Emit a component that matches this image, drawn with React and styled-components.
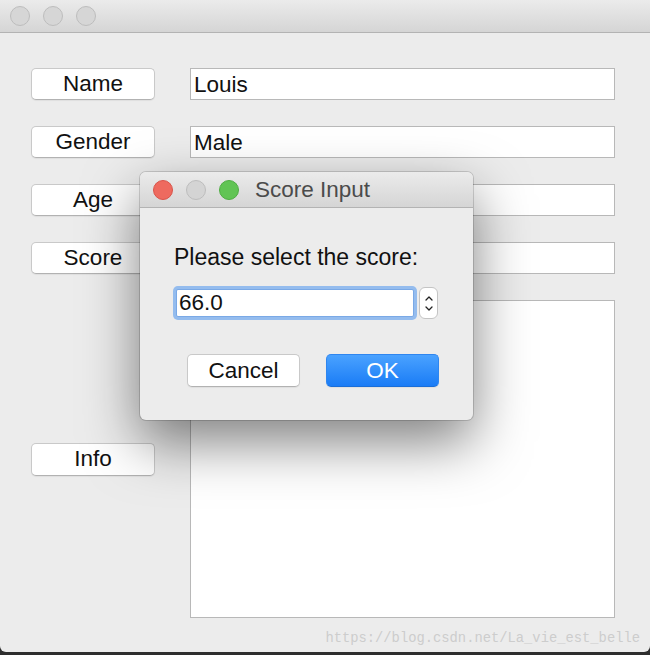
import React from 'react'
import styled, { createGlobalStyle } from 'styled-components'

const GlobalStyle = createGlobalStyle`
  html, body {
    margin: 0;
    padding: 0;
    background: #2e2e2e;
  }
  body {
    font-family: "Liberation Sans", Arial, sans-serif;
  }
`

const Window = styled.div`
  position: relative;
  width: 650px;
  height: 652px;
  background: #ececec;
  border-radius: 0 0 6px 6px;
  display: flex;
  flex-direction: column;
  overflow: hidden;
`

const TitleBar = styled.div`
  height: ${p => p.$h}px;
  flex: none;
  box-sizing: border-box;
  display: flex;
  align-items: center;
  gap: 13px;
  padding-left: ${p => p.$pad}px;
  background: linear-gradient(#ebebeb, #d5d5d5);
  border-bottom: 1px solid #b3b3b3;
  border-radius: ${p => (p.$round ? '6px 6px 0 0' : '0')};
`

const Light = styled.span`
  width: 20px;
  height: 20px;
  border-radius: 50%;
  box-sizing: border-box;
  background: ${p => p.$color};
  border: 1px solid ${p => p.$edge};
`

const Title = styled.span`
  margin-left: 3px;
  font-size: 22.5px;
  color: #4b4b4b;
`

const Form = styled.div`
  flex: 1;
  display: grid;
  grid-template-columns: 124px 1fr;
  grid-template-rows: 32px 32px 32px 32px 1fr;
  column-gap: 35px;
  row-gap: 26px;
  padding: 35px 35px 34px 31px;
`

const PushButton = styled.button`
  height: ${p => p.$h || 32}px;
  box-sizing: border-box;
  font-family: inherit;
  font-size: 22.5px;
  color: #111;
  background: #ffffff;
  border: 1px solid #c9c9c9;
  border-bottom-color: #b2b2b2;
  border-radius: 5px;
  box-shadow: 0 1px 1px rgba(0, 0, 0, 0.06);
  padding: 0;
  align-self: ${p => p.$center ? 'center' : 'stretch'};
`

const LineEdit = styled.div`
  box-sizing: border-box;
  height: 32px;
  background: #fff;
  border: 1px solid #b8b8b8;
  font-size: 22.5px;
  color: #111;
  padding: 2px 3px 0;
  display: flex;
  align-items: center;
`

const TextArea = styled.div`
  background: #fff;
  border: 1px solid #b8b8b8;
`

const Dialog = styled.div`
  position: absolute;
  left: 140px;
  top: 172px;
  width: 333px;
  height: 248px;
  background: #ececec;
  border-radius: 6px;
  box-shadow: 0 0 0 1px rgba(0, 0, 0, 0.15), 0 22px 55px rgba(0, 0, 0, 0.5);
  display: flex;
  flex-direction: column;
`

const DialogBody = styled.div`
  padding: 37px 34px 0 34px;
  display: flex;
  flex-direction: column;
`

const Label = styled.div`
  font-size: 23px;
  line-height: 24px;
  color: #111;
`

const SpinRow = styled.div`
  margin-top: 18px;
  display: flex;
  align-items: center;
  gap: 5px;
  padding-left: 2px;
`

const SpinInput = styled.div`
  width: 238px;
  height: 28px;
  box-sizing: border-box;
  background: #fff;
  border: 1px solid #7aa9e6;
  border-radius: 2px;
  box-shadow: 0 0 0 3px #94bcee;
  font-size: 22.5px;
  color: #111;
  padding-left: 2px;
  display: flex;
  align-items: center;
`

const Stepper = styled.div`
  width: 19px;
  height: 32px;
  box-sizing: border-box;
  background: #fff;
  border: 1px solid #c4c4c4;
  border-radius: 6px;
  display: flex;
  flex-direction: column;
  align-items: center;
  justify-content: center;
  gap: 5px;
`

const ButtonRow = styled.div`
  margin-top: 35px;
  display: flex;
  justify-content: flex-end;
  gap: 26px;
`

const DialogButton = styled(PushButton)`
  width: 113px;
  height: 33px;
  ${p => p.$primary && `
    color: #fff;
    background: linear-gradient(#4aa2ff, #1a7cf6);
    border: 1px solid #2f86ef;
    border-bottom-color: #1a6ed8;
  `}
`

const Watermark = styled.div`
  position: absolute;
  right: 10px;
  bottom: 6px;
  font-family: "Liberation Mono", "Courier New", monospace;
  font-size: 13.8px;
  color: #cdcdcd;
`

const Chevron = ({ up }) => (
  <svg width="8" height="5" viewBox="0 0 8 5">
    <path
      d={up ? 'M1 4 L4 1 L7 4' : 'M1 1 L4 4 L7 1'}
      fill="none"
      stroke="#222"
      strokeWidth="1.3"
      strokeLinecap="round"
      strokeLinejoin="round"
    />
  </svg>
)

export default function App() {
  return (
    <>
      <GlobalStyle />
      <Window>
        <TitleBar $h={33} $pad={10}>
          <Light $color="#d6d6d6" $edge="#bdbdbd" />
          <Light $color="#d6d6d6" $edge="#bdbdbd" />
          <Light $color="#d6d6d6" $edge="#bdbdbd" />
        </TitleBar>
        <Form>
          <PushButton>Name</PushButton>
          <LineEdit>Louis</LineEdit>
          <PushButton>Gender</PushButton>
          <LineEdit>Male</LineEdit>
          <PushButton>Age</PushButton>
          <LineEdit />
          <PushButton>Score</PushButton>
          <LineEdit />
          <PushButton $center $h={33}>Info</PushButton>
          <TextArea />
        </Form>
        <Watermark>https://blog.csdn.net/La_vie_est_belle</Watermark>

        <Dialog>
          <TitleBar $h={36} $pad={13} $round>
            <Light $color="#ee6a5f" $edge="#d9544a" />
            <Light $color="#d4d4d4" $edge="#bdbdbd" />
            <Light $color="#61c454" $edge="#4fad43" />
            <Title>Score Input</Title>
          </TitleBar>
          <DialogBody>
            <Label>Please select the score:</Label>
            <SpinRow>
              <SpinInput>66.0</SpinInput>
              <Stepper>
                <Chevron up />
                <Chevron />
              </Stepper>
            </SpinRow>
            <ButtonRow>
              <DialogButton>Cancel</DialogButton>
              <DialogButton $primary>OK</DialogButton>
            </ButtonRow>
          </DialogBody>
        </Dialog>
      </Window>
    </>
  )
}
